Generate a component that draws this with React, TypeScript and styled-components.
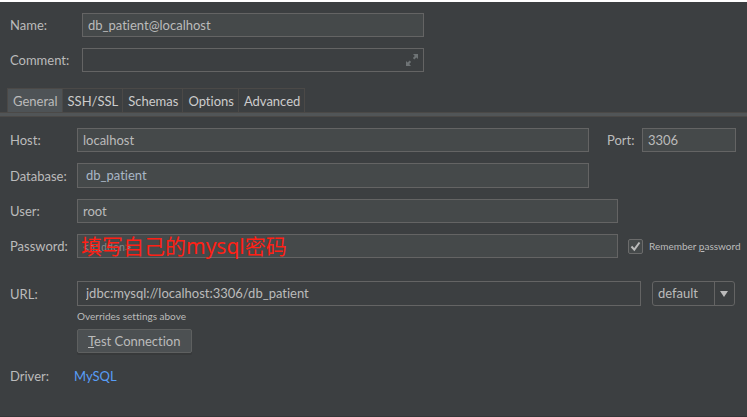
import React from "react";
import styled, { createGlobalStyle } from "styled-components";

const GlobalStyle = createGlobalStyle`
  * { box-sizing: border-box; }
  body {
    margin: 0;
    background: #3c3f41;
    color: #bbbbbb;
    font: 13px/20px Lato, "Noto Sans CJK SC", sans-serif;
    font-variant-ligatures: none;
  }
  input, select, button { font: inherit; font-variant-ligatures: none; color: inherit; margin: 0; }
`;

const Dialog = styled.main`
  min-height: 100vh;
  border-top: 2px solid #ffffff;
  border-bottom: 1px solid #343638;
  padding-top: 11px;
`;

const Header = styled.section`
  display: grid;
  grid-template-columns: 72px minmax(0, 342px);
  row-gap: 11px;
  padding: 0 10px;
  align-items: center;
`;

const Panel = styled.form`
  display: flex;
  flex-direction: column;
  gap: 11px;
  padding: 11px 8px 0 10px;
`;

const Row = styled.div<{ $before?: number; $end?: number }>`
  display: flex;
  align-items: center;
  margin-top: ${(p) => p.$before ?? 0}px;
  padding-right: ${(p) => p.$end ?? 0}px;
`;

const Label = styled.label<{ $width?: number }>`
  flex: none;
  width: ${(p) => (p.$width ? `${p.$width}px` : "auto")};
  white-space: nowrap;
`;

const Field = styled.input<{ $plain?: boolean; $tall?: boolean; $inset?: number }>`
  display: block;
  flex: 1;
  width: 100%;
  min-width: 0;
  height: ${(p) => (p.$tall ? 25 : 24)}px;
  padding: 0 ${(p) => p.$inset ?? 5}px 1px;
  border: 1px solid #646464;
  border-radius: 0;
  outline: none;
  background: ${(p) => (p.$plain ? "transparent" : "#45494a")};
  &::placeholder { color: #85898a; opacity: 1; font: 10px "Liberation Mono", monospace; }
`;

const DatabaseField = styled(Field)`
  color: #a9b7c6;
`;

const FieldWrap = styled.div`
  position: relative;
  flex: 1;
  min-width: 0;
`;

const ExpandButton = styled.button`
  position: absolute;
  top: 6px;
  right: 6px;
  display: flex;
  padding: 0;
  border: 0;
  background: none;
`;

const Note = styled.span`
  position: absolute;
  top: -3px;
  left: 4px;
  color: #ff2015;
  font-family: "Noto Sans", "Noto Sans CJK SC", sans-serif;
  font-size: 21px;
  line-height: 30px;
  white-space: nowrap;
  pointer-events: none;
`;

const Tabs = styled.nav`
  display: flex;
  margin-top: 16px;
  padding-left: 7px;
`;

const TabRule = styled.div`
  height: 5px;
  border: solid #4b4947;
  border-width: 1px 0;
  background: #515557;
`;

const Tab = styled.button<{ $active?: boolean }>`
  height: 24px;
  padding: 0 4px 0 5px;
  border: 1px solid #4b4947;
  border-left-width: ${(p) => (p.$active ? 1 : 0)}px;
  border-bottom: 0;
  background: ${(p) => (p.$active ? "#4e5356" : "transparent")};
  color: ${(p) => (p.$active ? "#bbbbbb" : "#cccccc")};
  line-height: 20px;
`;

const PortGroup = styled.div`
  display: flex;
  align-items: center;
  width: 129px;
  margin-left: 18px;
`;

const Remember = styled.label`
  display: flex;
  align-items: center;
  gap: 6px;
  width: 111px;
  margin-left: 10px;
  font-size: 10px;
  white-space: nowrap;
`;

const CheckWrap = styled.span`
  position: relative;
  display: flex;
  svg { position: absolute; inset: 0; pointer-events: none; }
`;

const Checkbox = styled.input`
  appearance: none;
  width: 15px;
  height: 15px;
  border: 1px solid #6b6b6b;
  border-radius: 2px;
  background: #45494a;
  & + svg { visibility: hidden; }
  &:checked + svg { visibility: visible; }
`;

const SelectWrap = styled.div`
  position: relative;
  width: 83px;
  margin-left: 11px;
  svg { position: absolute; top: 0; right: 0; pointer-events: none; }
`;

const Select = styled.select`
  display: block;
  appearance: none;
  width: 100%;
  height: 25px;
  padding: 0 22px 1px 5px;
  border: 1px solid #646464;
  border-radius: 3px;
  background: transparent;
  outline: none;
`;

const Details = styled.div`
  display: flex;
  flex-direction: column;
  align-items: flex-start;
  gap: 5px;
  margin: -9px 0 0 67px;
`;

const Hint = styled.small`
  font-size: 10px;
  line-height: 16px;
`;

const TestButton = styled.button`
  height: 24px;
  padding: 0 10px;
  border: 1px solid #5e6060;
  border-radius: 2px;
  background: #4c5052;
  box-shadow: 0 2px 0 #37393a;
  line-height: 20px;
`;

const DriverLink = styled.a`
  color: #589df6;
  text-decoration: none;
`;

const tabs = ["General", "SSH/SSL", "Schemas", "Options", "Advanced"];

export default function App() {
  return (
    <>
      <GlobalStyle />
      <Dialog>
        <Header>
          <Label htmlFor="name">Name:</Label>
          <Field id="name" defaultValue="db_patient@localhost" />
          <Label htmlFor="comment">Comment:</Label>
          <FieldWrap>
            <Field id="comment" $plain />
            <ExpandButton type="button" aria-label="Expand comment">
              <svg width="12" height="12" viewBox="0 0 12 12" fill="#6e7375">
                <path d="M7 0H12V5L10.4 3.4 8.3 5.5 6.9 4.1 8.8 2zM0 7L1.6 8.6 3.7 6.5 5.1 7.9 3.2 10 5 12H0z" />
              </svg>
            </ExpandButton>
          </FieldWrap>
        </Header>
        <Tabs>
          {tabs.map((tab, i) => (
            <Tab key={tab} type="button" $active={i === 0}>{tab}</Tab>
          ))}
        </Tabs>
        <TabRule />
        <Panel>
          <Row $end={3}>
            <Label htmlFor="host" $width={67}>Host:</Label>
            <Field id="host" defaultValue="localhost" />
            <PortGroup>
              <Label htmlFor="port" $width={35}>Port:</Label>
              <Field id="port" defaultValue="3306" />
            </PortGroup>
          </Row>
          <Row $end={150}>
            <Label htmlFor="database" $width={67}>Database:</Label>
            <DatabaseField id="database" defaultValue="db_patient" $tall $inset={8} />
          </Row>
          <Row $end={121}>
            <Label htmlFor="user" $width={67}>User:</Label>
            <Field id="user" defaultValue="root" />
          </Row>
          <Row>
            <Label htmlFor="password" $width={67}>Password:</Label>
            <FieldWrap>
              <Field id="password" type="password" placeholder="<hidden>" />
              <Note>填写自己的mysql密码</Note>
            </FieldWrap>
            <Remember>
              <CheckWrap>
                <Checkbox type="checkbox" defaultChecked />
                <svg width="15" height="15" viewBox="0 0 15 15" fill="none" stroke="#bbbbbb" strokeWidth="2">
                  <path d="M3.5 7.5L6.3 10.7 11.5 3.5" />
                </svg>
              </CheckWrap>
              <span>Remember <u>p</u>assword</span>
            </Remember>
          </Row>
          <Row $before={12} $end={4}>
            <Label htmlFor="url" $width={67}>URL:</Label>
            <Field id="url" defaultValue="jdbc:mysql://localhost:3306/db_patient" $plain $tall $inset={8} />
            <SelectWrap>
              <Select aria-label="URL type" defaultValue="default">
                <option>default</option>
              </Select>
              <svg width="21" height="25" viewBox="0 0 21 25">
                <path d="M0 0H1V25H0z" fill="#646464" />
                <path d="M6 10H14L10 16z" fill="#bbbbbb" />
              </svg>
            </SelectWrap>
          </Row>
          <Details>
            <Hint>Overrides settings above</Hint>
            <TestButton type="button"><u>T</u>est Connection</TestButton>
          </Details>
          <Row $before={2}>
            <Label as="span" $width={64}>Driver:</Label>
            <DriverLink href="#mysql">MySQL</DriverLink>
          </Row>
        </Panel>
      </Dialog>
    </>
  );
}
